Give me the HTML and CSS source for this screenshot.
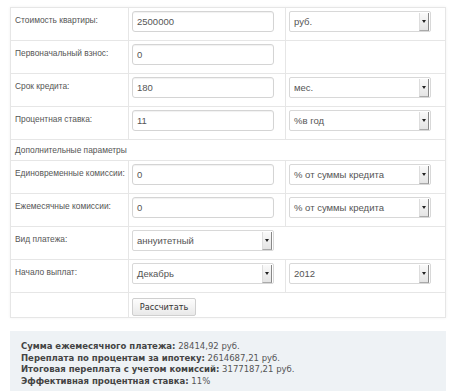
FILE: index.html
```html
<!DOCTYPE html>
<html lang="ru">
<head>
<meta charset="utf-8">
<link rel="stylesheet" href="styles.css">
</head>
<body>
<div class="page">
  <table class="calc">
    <tr>
      <td class="lbl">Стоимость квартиры:</td>
      <td class="fld"><div class="inp">2500000</div></td>
      <td class="fld"><div class="sel"><span>руб.</span><i class="arr"></i></div></td>
    </tr>
    <tr>
      <td class="lbl">Первоначальный взнос:</td>
      <td class="fld"><div class="inp">0</div></td>
      <td class="fld"></td>
    </tr>
    <tr>
      <td class="lbl">Срок кредита:</td>
      <td class="fld"><div class="inp">180</div></td>
      <td class="fld"><div class="sel"><span>мес.</span><i class="arr"></i></div></td>
    </tr>
    <tr>
      <td class="lbl">Процентная ставка:</td>
      <td class="fld"><div class="inp">11</div></td>
      <td class="fld"><div class="sel"><span>%в год</span><i class="arr"></i></div></td>
    </tr>
    <tr class="sub">
      <td colspan="3" class="lbl">Дополнительные параметры</td>
    </tr>
    <tr>
      <td class="lbl">Единовременные комиссии:</td>
      <td class="fld"><div class="inp">0</div></td>
      <td class="fld"><div class="sel"><span>% от суммы кредита</span><i class="arr"></i></div></td>
    </tr>
    <tr>
      <td class="lbl">Ежемесячные комиссии:</td>
      <td class="fld"><div class="inp">0</div></td>
      <td class="fld"><div class="sel"><span>% от суммы кредита</span><i class="arr"></i></div></td>
    </tr>
    <tr>
      <td class="lbl">Вид платежа:</td>
      <td class="fld" colspan="2"><div class="sel"><span>аннуитетный</span><i class="arr"></i></div></td>
    </tr>
    <tr>
      <td class="lbl">Начало выплат:</td>
      <td class="fld"><div class="sel"><span>Декабрь</span><i class="arr"></i></div></td>
      <td class="fld"><div class="sel"><span>2012</span><i class="arr"></i></div></td>
    </tr>
    <tr class="btnrow">
      <td class="lbl"></td>
      <td class="fld" colspan="2"><button class="btn">Рассчитать</button></td>
    </tr>
  </table>
  <div class="result">
    <div><b>Сумма ежемесячного платежа:</b> 28414,92 руб.</div>
    <div><b>Переплата по процентам за ипотеку:</b> 2614687,21 руб.</div>
    <div><b>Итоговая переплата с учетом комиссий:</b> 3177187,21 руб.</div>
    <div><b>Эффективная процентная ставка:</b> 11%</div>
  </div>
</div>
</body>
</html>
```

FILE: styles.css
```css
html, body {
  margin: 0;
  padding: 0;
  background: #fff;
}
.page {
  padding: 7px 4px 0 10px;
}
.calc {
  border-collapse: collapse;
  width: 436px;
  table-layout: fixed;
  box-shadow: 0 0 3px rgba(0,0,0,0.06);
}
.calc td {
  border: 1px solid #e6e6e6;
  height: 33px;
  vertical-align: top;
  padding: 0;
}
.calc td:nth-child(1) { width: 118px; }
.calc tr > td.fld:nth-child(2) { width: 157px; }
.lbl {
  font-family: "Liberation Sans", Arial, sans-serif;
  font-size: 8.4px;
  white-space: nowrap;
  color: #555;
  padding: 7px 0 0 4px !important;
  box-sizing: border-box;
}
.sub .lbl {
  height: 21px;
  padding-top: 5px !important;
}
.fld {
  padding: 3px 0 0 3px !important;
  box-sizing: border-box;
}
.inp, .sel {
  box-sizing: border-box;
  width: 142px;
  height: 21px;
  border: 1px solid #d4d4d4;
  border-radius: 3px;
  box-shadow: inset 0 1px 1px rgba(0,0,0,0.06);
  background: #fff;
  font-family: "Liberation Sans", Arial, sans-serif;
  font-size: 9.5px;
  color: #555;
  padding: 0 0 0 4px;
  display: flex;
  align-items: center;
}
.sel {
  justify-content: space-between;
  padding-right: 1px;
  border-radius: 2px;
  border-color: #d8d8d8;
  box-shadow: none;
}
.arr {
  width: 8px;
  height: 17px;
  background: linear-gradient(#fafafa, #e4e4e4);
  border-left: 1px solid #ddd;
  border-right: 1px solid #888;
  border-bottom: 1px solid #aaa;
  display: flex;
  align-items: center;
  justify-content: center;
}
.arr::after {
  content: "";
  border-left: 2px solid transparent;
  border-right: 2px solid transparent;
  border-top: 3px solid #222;
}
.btnrow td { height: 25px; }
.btn {
  font-family: "DejaVu Sans", Verdana, sans-serif;
  font-size: 8.2px;
  color: #333;
  height: 18px;
  width: 64px;
  padding: 0;
  margin: 0;
  border: 1px solid #cfcfcf;
  border-radius: 2px;
  background: linear-gradient(#fdfdfd, #e9e9e9);
}
.result {
  margin-top: 13px;
  width: 436px;
  box-sizing: border-box;
  background: #eef2f5;
  padding: 10px 11px 0;
  font-family: "DejaVu Sans", Verdana, sans-serif;
  font-size: 8.5px;
  line-height: 11.7px;
  color: #555;
  height: 62px;
}
.result b {
  color: #444;
}
```
